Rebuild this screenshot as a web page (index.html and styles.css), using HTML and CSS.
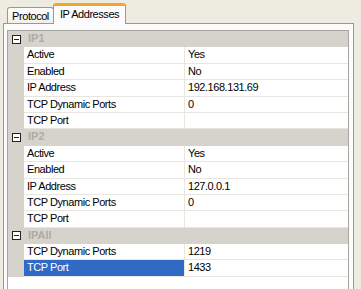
FILE: index.html
```html
<!DOCTYPE html>
<html lang="en">
<head>
    <meta charset="UTF-8">
    <title>IP Addresses</title>
    <link rel="stylesheet" href="styles.css">
</head>
<body>
    <div class="tabs">
        <div class="tab">Protocol</div>
        <div class="tab active">IP Addresses</div>
    </div>
    <div class="page">
        <div class="grid">
            <div class="cat"><span class="gutter"><span class="toggle"></span></span><span class="cat-name">IP1</span></div>
            <div class="row"><span class="gutter"></span><span class="name">Active</span><span class="value">Yes</span></div>
            <div class="row"><span class="gutter"></span><span class="name">Enabled</span><span class="value">No</span></div>
            <div class="row"><span class="gutter"></span><span class="name">IP Address</span><span class="value">192.168.131.69</span></div>
            <div class="row"><span class="gutter"></span><span class="name">TCP Dynamic Ports</span><span class="value">0</span></div>
            <div class="row"><span class="gutter"></span><span class="name">TCP Port</span><span class="value"></span></div>

            <div class="cat"><span class="gutter"><span class="toggle"></span></span><span class="cat-name">IP2</span></div>
            <div class="row"><span class="gutter"></span><span class="name">Active</span><span class="value">Yes</span></div>
            <div class="row"><span class="gutter"></span><span class="name">Enabled</span><span class="value">No</span></div>
            <div class="row"><span class="gutter"></span><span class="name">IP Address</span><span class="value">127.0.0.1</span></div>
            <div class="row"><span class="gutter"></span><span class="name">TCP Dynamic Ports</span><span class="value">0</span></div>
            <div class="row"><span class="gutter"></span><span class="name">TCP Port</span><span class="value"></span></div>

            <div class="cat"><span class="gutter"><span class="toggle"></span></span><span class="cat-name">IPAll</span></div>
            <div class="row"><span class="gutter"></span><span class="name">TCP Dynamic Ports</span><span class="value">1219</span></div>
            <div class="row selected"><span class="gutter"></span><span class="name">TCP Port</span><span class="value">1433</span></div>
        </div>
    </div>
</body>
</html>
```

FILE: styles.css
```css
body {
    margin: 0;
    background-color: #eeebe0;
    font-family: "Liberation Sans", Arial, sans-serif;
    font-size: 11px;
    letter-spacing: -0.45px;
    color: #000;
    height: 289px;
    overflow: hidden;
}

.tabs {
    display: flex;
    align-items: flex-end;
    height: 23px;
    padding-left: 7px;
    box-sizing: border-box;
}

.tab {
    box-sizing: border-box;
    width: 47px;
    height: 16px;
    border: 1px solid #919b9c;
    border-bottom: none;
    border-radius: 3px 3px 0 0;
    background: linear-gradient(#fefefe, #f1efe6);
    text-align: center;
    line-height: 17px;
}

.tab.active {
    position: relative;
    width: 73px;
    height: 21px;
    margin-left: -1px;
    margin-bottom: -1px;
    background: #fcfcfe;
    border-top: 3px solid #f6a52c;
    line-height: 16px;
    z-index: 1;
}

.page {
    box-sizing: border-box;
    margin-left: 3px;
    width: 351px;
    height: 266px;
    border: 1px solid #919b9c;
    border-bottom: none;
    background-color: #fcfcfe;
    padding: 6px 3px 0 3px;
}

.grid {
    box-sizing: border-box;
    width: 342px;
    height: 260px;
    border: 1px solid #a7a69e;
    border-bottom: none;
    background-color: #fff;
}

.row,
.cat {
    display: grid;
    grid-template-columns: 16px 161px 1fr;
    height: 16.4px;
    line-height: 15px;
}

.cat {
    background-color: #d6d3cc;
}

.gutter {
    background-color: #d6d3cc;
    display: flex;
    align-items: center;
    justify-content: center;
}

.toggle {
    position: relative;
    box-sizing: border-box;
    width: 9px;
    height: 9px;
    border: 1px solid #222;
    background-color: #fff;
}

.toggle::after {
    content: "";
    position: absolute;
    left: 1px;
    right: 1px;
    top: 3px;
    height: 1px;
    background-color: #222;
}

.cat-name {
    grid-column: 2 / 4;
    padding-left: 4px;
    font-weight: bold;
    color: #aeaba4;
    letter-spacing: 0;
}

.name,
.value {
    padding-left: 3px;
    border-bottom: 1px solid #e8e6df;
    white-space: nowrap;
}

.name {
    border-right: 1px solid #e8e6df;
}

.selected .name {
    background-color: #316ac5;
    color: #fff;
}
```
